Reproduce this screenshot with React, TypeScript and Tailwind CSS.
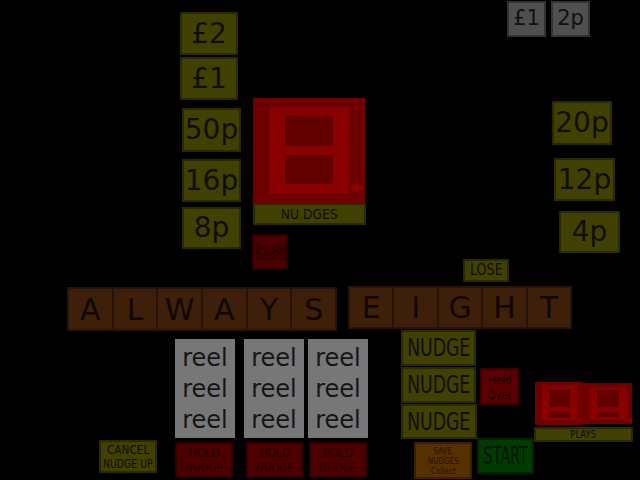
import React from "react";

const F = { fontFamily: '"DejaVu Sans", "Liberation Sans", sans-serif' };

function Digit({
  w,
  h,
  frame,
  holes,
  dot,
}: {
  w: number;
  h: number;
  frame: [number, number, number, number];
  holes: [number, number, number, number][];
  dot: [number, number, number, number];
}) {
  const r = (b: [number, number, number, number]) =>
    `M${b[0]} ${b[1]}H${b[2]}V${b[3]}H${b[0]}Z`;
  const d = r(frame) + holes.map(r).join("");
  return (
    <svg width={w} height={h} viewBox={`0 0 ${w} ${h}`} className="block">
      {holes.map((b, i) => (
        <rect key={i} x={b[0]} y={b[1]} width={b[2] - b[0]} height={b[3] - b[1]} fill="#620000" />
      ))}
      <path d={d} fill="#880000" fillRule="evenodd" />
      <ellipse cx={dot[0]} cy={dot[1]} rx={dot[2]} ry={dot[3]} fill="#880000" />
    </svg>
  );
}

export default function App() {
  const olive = "bg-[#404000] border-2 border-[#2a2a00] flex items-center justify-center text-[#0e0e00]";
  return (
    <div className="relative w-[640px] h-[480px] bg-black overflow-hidden" style={F}>
      {/* left coin column */}
      <div className="absolute left-[180px] top-[12px] flex flex-col">
        <div className={`${olive} w-[58px] h-[43px] text-[28px]`}>£2</div>
        <div className={`${olive} w-[58px] h-[43px] mt-[2px] text-[28px]`}>£1</div>
        <div className={`${olive} w-[59px] h-[44px] mt-[8px] ml-[2px] text-[28px]`}>50p</div>
        <div className={`${olive} w-[59px] h-[43px] mt-[7px] ml-[2px] text-[28px]`}>16p</div>
        <div className={`${olive} w-[59px] h-[42px] mt-[5px] ml-[2px] text-[28px]`}>8p</div>
      </div>

      {/* top right grey coins */}
      <div className="absolute left-[507px] top-[1px] flex gap-[5px]">
        <div className="w-[39px] h-[36px] bg-[#4f4f4f] border-2 border-[#333333] flex items-center justify-center text-[21px] text-[#111111]">£1</div>
        <div className="w-[39px] h-[36px] bg-[#4f4f4f] border-2 border-[#333333] flex items-center justify-center text-[21px] text-[#111111]">2p</div>
      </div>

      {/* right coin column */}
      <div className="absolute left-[552px] top-[101px] flex flex-col">
        <div className={`${olive} w-[60px] h-[44px] text-[28px]`}>20p</div>
        <div className={`${olive} w-[61px] h-[43px] mt-[13px] ml-[2px] text-[28px]`}>12p</div>
        <div className={`${olive} w-[61px] h-[42px] mt-[10px] ml-[7px] text-[28px]`}>4p</div>
      </div>

      {/* nudges display */}
      <div className="absolute left-[253px] top-[98px] flex flex-col">
        <div className="w-[112px] h-[105px] bg-[#6e0000]">
          <Digit
            w={112}
            h={105}
            frame={[16, 9, 96, 96]}
            holes={[
              [32, 18, 80, 48],
              [32, 57, 80, 86],
            ]}
            dot={[104, 90, 7, 4]}
          />
        </div>
        <div className="w-[113px] h-[22px] bg-[#404000] border-2 border-[#2a2a00] flex items-center justify-center text-[14px] text-[#0e0e00]">
          <span className="inline-block scale-x-[0.88]">NU DGES</span>
        </div>
      </div>

      {/* reserve held */}
      <div className="absolute left-[252px] top-[234px] w-[36px] h-[36px] bg-[#4a0000] border-2 border-[#2e0000] flex items-center justify-center text-[23px] text-[#1a0000] overflow-hidden">
        <span className="inline-block scale-x-[0.21] whitespace-nowrap">ReserveHeld</span>
      </div>

      {/* LOSE */}
      <div className={`absolute left-[463px] top-[259px] w-[46px] h-[23px] ${olive} text-[15px]`}>
        <span className="inline-block scale-x-[0.85]">LOSE</span>
      </div>

      {/* ALWAYS */}
      <div className="absolute left-[67px] top-[287px] w-[270px] h-[44px] bg-[#26130a] p-[2px] flex gap-[2px]">
        {["A", "L", "W", "A", "Y", "S"].map((c, i) => (
          <div key={i} className="flex-1 bg-[#3d1f0a] flex items-center justify-center text-[30px] text-[#120700]">
            {c}
          </div>
        ))}
      </div>

      {/* EIGHT */}
      <div className="absolute left-[348px] top-[286px] w-[224px] h-[43px] bg-[#26130a] p-[2px] flex gap-[2px]">
        {["E", "I", "G", "H", "T"].map((c, i) => (
          <div key={i} className="flex-1 bg-[#3d1f0a] flex items-center justify-center text-[30px] text-[#120700]">
            {c}
          </div>
        ))}
      </div>

      {/* reels */}
      <div className="absolute left-[175px] top-[339px] flex">
        {[
          "w-[60px]",
          "w-[60px] ml-[9px]",
          "w-[60px] ml-[4px]",
        ].map((cls, i) => (
          <div key={i} className={`${cls} h-[99px] bg-[#777777] flex flex-col items-center pt-[4px] text-[24px] leading-[31px] text-[#151515]`}>
            <span>reel</span>
            <span>reel</span>
            <span>reel</span>
          </div>
        ))}
      </div>

      {/* hold buttons */}
      <div className="absolute left-[175px] top-[442px] flex">
        {["w-[58px]", "w-[57px] ml-[13px]", "w-[58px] ml-[6px]"].map((cls, i) => (
          <div key={i} className={`${cls} h-[36px] bg-[#4c0000] border-2 border-[#300000] flex flex-col items-center justify-center text-[12.5px] leading-[15px] text-[#260303]`}>
            <span className="inline-block scale-x-[0.85]">HOLD</span>
            <span className="inline-block scale-x-[0.82]">NUDGE</span>
          </div>
        ))}
      </div>

      {/* nudge buttons */}
      <div className="absolute left-[401px] top-[330px] flex flex-col gap-[1px]">
        <div className={`${olive} w-[75px] h-[36px] text-[25px]`}>
          <span className="inline-block scale-x-[0.69]">NUDGE</span>
        </div>
        <div className={`${olive} w-[75px] h-[36px] text-[25px]`}>
          <span className="inline-block scale-x-[0.69]">NUDGE</span>
        </div>
        <div className={`${olive} w-[76px] h-[35px] text-[25px]`}>
          <span className="inline-block scale-x-[0.69]">NUDGE</span>
        </div>
      </div>

      {/* held over */}
      <div className="absolute left-[480px] top-[368px] w-[39px] h-[37px] bg-[#5a0000] border-2 border-[#380000] flex flex-col items-center justify-center text-[13px] leading-[15px] text-[#1e0000]">
        <span className="inline-block scale-x-[0.8]">Held</span>
        <span className="inline-block scale-x-[0.8]">Over</span>
      </div>

      {/* plays display */}
      <div className="absolute left-[534px] top-[382px] flex flex-col">
        <div className="flex items-start">
          <div className="ml-[1px] w-[48px] h-[43px] bg-[#6e0000]">
            <Digit
              w={48}
              h={43}
              frame={[7, 3, 42, 38]}
              holes={[
                [14, 8, 35, 25],
                [14, 29, 35, 36],
              ]}
              dot={[45, 37, 2.5, 1.5]}
            />
          </div>
          <div className="mt-[1px] w-[49px] h-[41px] bg-[#6e0000]">
            <Digit
              w={49}
              h={41}
              frame={[7, 4, 44, 37]}
              holes={[
                [14, 7, 36, 24],
                [14, 29, 36, 34],
              ]}
              dot={[47, 37, 2.5, 1.5]}
            />
          </div>
        </div>
        <div className="mt-[2px] w-[99px] h-[15px] bg-[#404000] border-2 border-[#2a2a00] flex items-center justify-center text-[10px] text-[#0e0e00]">
          <span className="inline-block scale-x-[0.85]">PLAYS</span>
        </div>
      </div>

      {/* cancel nudge up */}
      <div className={`absolute left-[99px] top-[440px] w-[58px] h-[33px] ${olive} flex-col text-[12px] leading-[14px]`}>
        <span className="inline-block scale-x-[0.88]">CANCEL</span>
        <span className="inline-block scale-x-[0.78] whitespace-nowrap">NUDGE UP</span>
      </div>

      {/* save nudges collect */}
      <div className="absolute left-[414px] top-[442px] w-[58px] h-[37px] bg-[#573000] border-2 border-[#3a2000] flex flex-col items-center justify-center text-[9px] leading-[10px] text-[#1e1000]">
        <span className="inline-block scale-x-[0.8]">SAVE</span>
        <span className="inline-block scale-x-[0.8]">NUDGES</span>
        <span className="inline-block scale-x-[0.8]">Collect</span>
      </div>

      {/* start */}
      <div className="absolute left-[477px] top-[438px] w-[57px] h-[36px] bg-[#003a00] border-2 border-[#002400] flex items-center justify-center text-[25px] text-[#001400]">
        <span className="inline-block scale-x-[0.58]">START</span>
      </div>
    </div>
  );
}
